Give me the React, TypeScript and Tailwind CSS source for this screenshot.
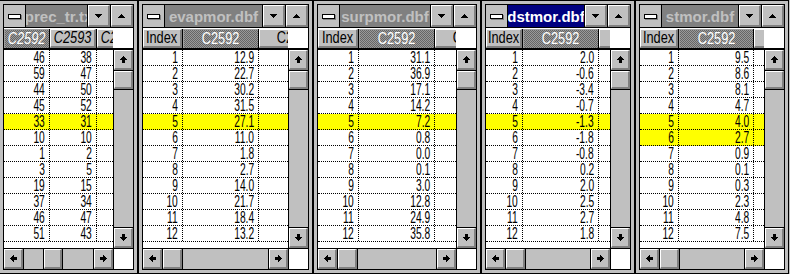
import React from "react";

const btn3d =
  "bg-[#c0c0c0] border-t border-l border-t-white border-l-white border-b-2 border-r-2 border-b-[#808080] border-r-[#808080]";

type Dir = "up" | "down" | "left" | "right";

function rectsFor(dir: Dir): [number, number, number, number][] {
  const up: [number, number, number, number][] = [
    [4, 1, 1, 1],
    [3, 2, 3, 1],
    [2, 3, 5, 1],
    [1, 4, 7, 1],
    [3, 5, 3, 3],
  ];
  return up.map(([x, y, w, h]) => {
    if (dir === "up") return [x, y, w, h];
    if (dir === "down") return [x, 9 - y - h, w, h];
    if (dir === "left") return [y, x, h, w];
    return [9 - y - h, x, h, w];
  });
}

function Arrow({ dir }: { dir: Dir }) {
  return (
    <svg width="9" height="9" viewBox="0 0 9 9" shapeRendering="crispEdges">
      {rectsFor(dir).map(([x, y, w, h], i) => (
        <rect key={i} x={x} y={y} width={w} height={h} fill="#000" />
      ))}
    </svg>
  );
}

function Tri({ down }: { down?: boolean }) {
  const rows = [
    [3, 1],
    [2, 3],
    [1, 5],
    [0, 7],
  ];
  return (
    <svg width="7" height="4" viewBox="0 0 7 4" shapeRendering="crispEdges">
      {rows.map(([x, w], i) => (
        <rect key={i} x={x} y={down ? 3 - i : i} width={w} height={1} fill="#000" />
      ))}
    </svg>
  );
}

type WinDef = {
  title: string;
  active?: boolean;
  outer: string;
  colA: string;
  colB: string;
  headers: [string, string, string];
  italic?: boolean;
  selected: number;
  rows: [string, string][];
  hl: number[];
  thumbShift?: boolean;
  extraClass?: string;
};

const idx = (vals: string[]): [string, string][] => vals.map((v, i) => [String(i + 1), v]);

const wins: WinDef[] = [
  {
    title: "dprec_tr.txt",
    outer: "w-[139px]",
    extraClass: "ml-[-1px]",
    colA: "w-[46px]",
    colB: "w-[47px]",
    headers: ["C2592", "C2593", "C2594"],
    italic: true,
    selected: 0,
    rows: [
      ["46", "38"],
      ["59", "47"],
      ["44", "50"],
      ["45", "52"],
      ["33", "31"],
      ["10", "10"],
      ["1", "2"],
      ["3", "5"],
      ["19", "15"],
      ["37", "34"],
      ["46", "47"],
      ["51", "43"],
    ],
    hl: [4],
    thumbShift: true,
  },
  {
    title: "evapmor.dbf",
    outer: "w-[175px]",
    colA: "w-[40px]",
    colB: "w-[76px]",
    headers: ["Index", "C2592", "C2593"],
    selected: 1,
    rows: idx(["12.9", "22.7", "30.2", "31.5", "27.1", "11.0", "1.8", "2.7", "14.0", "21.7", "18.4", "13.2"]),
    hl: [4],
  },
  {
    title: "surpmor.dbf",
    outer: "w-[168px]",
    colA: "w-[41px]",
    colB: "w-[76px]",
    headers: ["Index", "C2592", "C2593"],
    selected: 1,
    rows: idx(["31.1", "36.9", "17.1", "14.2", "7.2", "0.8", "0.0", "0.1", "3.0", "12.8", "24.9", "35.8"]),
    hl: [4],
  },
  {
    title: "dstmor.dbf",
    active: true,
    outer: "w-[154px]",
    colA: "w-[37px]",
    colB: "w-[76px]",
    headers: ["Index", "C2592", "C2593"],
    selected: 1,
    rows: idx(["2.0", "-0.6", "-3.4", "-0.7", "-1.3", "-1.8", "-0.8", "0.2", "2.0", "2.5", "2.7", "1.8"]),
    hl: [4],
  },
  {
    title: "stmor.dbf",
    outer: "w-[154px]",
    colA: "w-[39px]",
    colB: "w-[75px]",
    headers: ["Index", "C2592", "C2593"],
    selected: 1,
    rows: idx(["9.5", "8.6", "8.1", "4.7", "4.0", "2.7", "0.9", "0.1", "0.3", "2.3", "4.8", "7.5"]),
    hl: [4, 5],
  },
];

function HeaderCell({ text, w, sel, italic }: { text: string; w: string; sel: boolean; italic?: boolean }) {
  return (
    <div className={`${w} shrink-0 h-full border-r border-black`}>
      <div
        className={`h-full flex items-center justify-center overflow-hidden ${
          sel
            ? "bg-[image:repeating-conic-gradient(#9a9a9a_0%_25%,#666666_0%_50%)] bg-[length:2px_2px] text-white border-t border-l border-t-[#a0a0a0] border-l-[#a0a0a0]"
            : btn3d + " text-black"
        }`}
      >
        <span className={`inline-block whitespace-nowrap text-[16px] leading-none scale-x-[0.8] ${italic ? "italic" : ""}`}>
          {text}
        </span>
      </div>
    </div>
  );
}

function Cell({ text, w }: { text: string; w: string }) {
  return (
    <div className={`${w} shrink-0 h-full border-r border-dotted border-black flex items-center justify-end pr-[4px] pt-[1px]`}>
      <span className="inline-block whitespace-nowrap origin-right scale-x-[0.64] text-[16px] leading-none">{text}</span>
    </div>
  );
}

function Window({ d }: { d: WinDef }) {
  return (
    <div className={`${d.outer} ${d.extraClass ?? ""} h-[274px] shrink-0 border border-black bg-[#c0c0c0] p-[3px]`}>
      <div className="h-full border border-black flex flex-col bg-white">
        {/* Title bar */}
        <div className="h-[23px] shrink-0 flex border-b border-black">
          <div className="w-[22px] shrink-0 bg-[#c0c0c0] border-r border-black flex items-center justify-center">
            <div className="w-[13px] h-[5px] border border-black bg-white shadow-[1px_1px_0_#808080]" />
          </div>
          <div
            className={`flex-1 min-w-0 overflow-hidden flex items-center justify-center ${
              d.active ? "bg-[#000080] text-white" : "bg-[#808080] text-[#c0c0c0]"
            }`}
          >
            <span className="whitespace-nowrap font-bold text-[15px] leading-none">{d.title}</span>
          </div>
          <div className="w-[23px] shrink-0 border-l border-black">
            <div className={`${btn3d} h-full flex items-center justify-center`}>
              <Tri down />
            </div>
          </div>
          <div className="w-[23px] shrink-0 border-l border-black">
            <div className={`${btn3d} h-full flex items-center justify-center`}>
              <Tri />
            </div>
          </div>
        </div>

        {/* Body */}
        <div className="flex flex-1 min-h-0">
          <div className="flex-1 min-w-0 flex flex-col overflow-hidden">
            <div className="h-[22px] shrink-0 pt-[1px] flex border-b-2 border-black bg-white">
              <HeaderCell text={d.headers[0]} w={d.colA} sel={d.selected === 0} italic={d.italic} />
              <HeaderCell text={d.headers[1]} w={d.colB} sel={d.selected === 1} italic={d.italic} />
              <HeaderCell text={d.headers[2]} w={d.italic ? "w-[47px]" : "w-[76px]"} sel={false} italic={d.italic} />
            </div>
            {d.rows.map((r, i) => (
              <div
                key={i}
                className={`h-[16px] shrink-0 flex border-b border-dotted border-black ${
                  d.hl.includes(i) ? "bg-[#ffff00]" : "bg-white"
                }`}
              >
                <Cell text={r[0]} w={d.colA} />
                <Cell text={r[1]} w={d.colB} />
                <Cell text="" w="w-[76px]" />
              </div>
            ))}
          </div>
          <div className="w-[20px] shrink-0 flex flex-col">
            <div className="h-[22px] shrink-0 bg-white border-b-2 border-black" />
            <div className="flex-1 border-l border-black flex flex-col bg-[#c0c0c0]">
              <div className={`${btn3d} h-[20px] shrink-0 flex items-center justify-center`}>
                <Arrow dir="up" />
              </div>
              <div className="h-[20px] shrink-0 border-t border-b border-black">
                <div className={`${btn3d} h-full`} />
              </div>
              <div className="flex-1" />
              <div className="h-[21px] shrink-0 border-t border-black">
                <div className={`${btn3d} h-full flex items-center justify-center`}>
                  <Arrow dir="down" />
                </div>
              </div>
            </div>
          </div>
        </div>

        {/* Horizontal scrollbar */}
        <div className="h-[21px] shrink-0 flex border-t border-black">
          <div className="flex-1 min-w-0 flex bg-[#c0c0c0]">
            <div className="w-[20px] shrink-0 border-r border-black">
              <div className={`${btn3d} h-full flex items-center justify-center`}>
                <Arrow dir="left" />
              </div>
            </div>
            {d.thumbShift && <div className="w-[19px] shrink-0" />}
            <div className={`w-[20px] shrink-0 border-r border-black ${d.thumbShift ? "border-l" : ""}`}>
              <div className={`${btn3d} h-full`} />
            </div>
            <div className="flex-1" />
            <div className="w-[20px] shrink-0 border-l border-black">
              <div className={`${btn3d} h-full flex items-center justify-center`}>
                <Arrow dir="right" />
              </div>
            </div>
          </div>
          <div className="w-[20px] shrink-0 bg-white border-l border-black" />
        </div>
      </div>
    </div>
  );
}

export default function App() {
  return (
    <div
      className="w-[790px] h-[274px] overflow-hidden flex bg-[#c0c0c0]"
      style={{ fontFamily: '"Liberation Sans", Arial, sans-serif' }}
    >
      {wins.map((w, i) => (
        <Window key={i} d={w} />
      ))}
    </div>
  );
}
